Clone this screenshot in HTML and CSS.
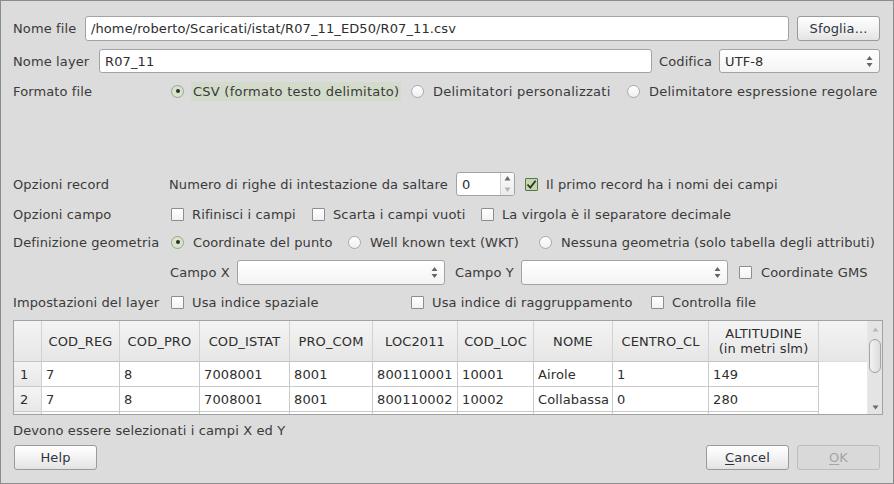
FILE: index.html
```html
<!DOCTYPE html>
<html>
<head>
<meta charset="utf-8">
<link rel="stylesheet" href="styles.css">
</head>
<body>
<div class="dialog">
  <div class="row r1">
    <span class="lbl lbl-file">Nome file</span>
    <div class="field f-grow path">/home/roberto/Scaricati/istat/R07_11_ED50/R07_11.csv</div>
    <div class="btn btn-side">Sfoglia...</div>
  </div>
  <div class="row r2">
    <span class="lbl lbl-layer">Nome layer</span>
    <div class="field f-grow">R07_11</div>
    <span class="lbl lbl-cod">Codifica</span>
    <div class="combo combo-enc"><span class="combo-txt">UTF-8</span><svg class="arr" width="7" height="13" viewBox="0 0 7 13"><path d="M3.5 1 L6.5 5 L0.5 5 Z" fill="#666"/><path d="M0.5 8 L6.5 8 L3.5 12 Z" fill="#666"/></svg></div>
  </div>
  <div class="row r3 rsmall wide">
    <span class="lbl col-lbl">Formato file</span>
    <div class="opt first w-240"><span class="radio on"></span><span class="txt txt-hl">CSV (formato testo delimitato)</span></div>
    <div class="opt w-216"><span class="radio"></span><span class="txt txt-r">Delimitatori personalizzati</span></div>
    <div class="opt"><span class="radio"></span><span class="txt txt-r">Delimitatore espressione regolare</span></div>
  </div>
  <div class="row r4">
    <span class="lbl col-lbl">Opzioni record</span>
    <span class="lbl num-lbl">Numero di righe di intestazione da saltare</span>
    <div class="spin"><span class="spin-val">0</span><span class="spin-btns"><svg width="7" height="20" viewBox="0 0 7 20"><path d="M3.5 2 L6.5 6.5 L0.5 6.5 Z" fill="#6a6a6a"/><path d="M0.5 13.5 L6.5 13.5 L3.5 18 Z" fill="#b4b4b4"/></svg></span></div>
    <div class="opt ml-10"><span class="check on"><svg width="11" height="11" viewBox="0 0 11 11"><path d="M1.5 5.5 L4.3 8.6 L9.6 1.8" fill="none" stroke="#2c2c2c" stroke-width="1.7"/></svg></span><span class="txt">Il primo record ha i nomi dei campi</span></div>
  </div>
  <div class="row rsmall r5">
    <span class="lbl col-lbl">Opzioni campo</span>
    <div class="opt first w-141"><span class="check"></span><span class="txt">Rifinisci i campi</span></div>
    <div class="opt w-169"><span class="check"></span><span class="txt">Scarta i campi vuoti</span></div>
    <div class="opt"><span class="check"></span><span class="txt">La virgola è il separatore decimale</span></div>
  </div>
  <div class="row rsmall r6">
    <span class="lbl col-lbl">Definizione geometria</span>
    <div class="opt first w-177"><span class="radio on"></span><span class="txt txt-r">Coordinate del punto</span></div>
    <div class="opt w-191"><span class="radio"></span><span class="txt txt-r">Well known text (WKT)</span></div>
    <div class="opt"><span class="radio"></span><span class="txt txt-r">Nessuna geometria (solo tabella degli attributi)</span></div>
  </div>
  <div class="row r7">
    <span class="lbl col-lbl"></span>
    <span class="lbl lbl-cx">Campo X</span>
    <div class="combo combo-x"><span class="combo-txt"></span><svg class="arr" width="7" height="13" viewBox="0 0 7 13"><path d="M3.5 1 L6.5 5 L0.5 5 Z" fill="#666"/><path d="M0.5 8 L6.5 8 L3.5 12 Z" fill="#666"/></svg></div>
    <span class="lbl lbl-cy">Campo Y</span>
    <div class="combo combo-y"><span class="combo-txt"></span><svg class="arr" width="7" height="13" viewBox="0 0 7 13"><path d="M3.5 1 L6.5 5 L0.5 5 Z" fill="#666"/><path d="M0.5 8 L6.5 8 L3.5 12 Z" fill="#666"/></svg></div>
    <div class="opt ml-11"><span class="check"></span><span class="txt txt-r">Coordinate GMS</span></div>
  </div>
  <div class="row rsmall r8">
    <span class="lbl col-lbl">Impostazioni del layer</span>
    <div class="opt first w-240"><span class="check"></span><span class="txt">Usa indice spaziale</span></div>
    <div class="opt w-240"><span class="check"></span><span class="txt">Usa indice di raggruppamento</span></div>
    <div class="opt"><span class="check"></span><span class="txt">Controlla file</span></div>
  </div>
  <div class="table">
    <div class="viewport">
      <div class="trow thead">
        <div class="c c0 h"></div>
        <div class="c c1 h">COD_REG</div>
        <div class="c c2 h">COD_PRO</div>
        <div class="c c3 h">COD_ISTAT</div>
        <div class="c c4 h">PRO_COM</div>
        <div class="c c5 h">LOC2011</div>
        <div class="c c6 h">COD_LOC</div>
        <div class="c c7 h">NOME</div>
        <div class="c c8 h">CENTRO_CL</div>
        <div class="c c9 h">ALTITUDINE<br>(in metri slm)</div>
        <div class="c-fill h"></div>
      </div>
      <div class="trow">
        <div class="c c0 rn">1</div>
        <div class="c c1">7</div>
        <div class="c c2">8</div>
        <div class="c c3">7008001</div>
        <div class="c c4">8001</div>
        <div class="c c5">800110001</div>
        <div class="c c6">10001</div>
        <div class="c c7">Airole</div>
        <div class="c c8">1</div>
        <div class="c c9">149</div>
      </div>
      <div class="trow">
        <div class="c c0 rn">2</div>
        <div class="c c1">7</div>
        <div class="c c2">8</div>
        <div class="c c3">7008001</div>
        <div class="c c4">8001</div>
        <div class="c c5">800110002</div>
        <div class="c c6">10002</div>
        <div class="c c7">Collabassa</div>
        <div class="c c8">0</div>
        <div class="c c9">280</div>
      </div>
      <div class="trow">
        <div class="c c0 rn"></div>
        <div class="c c1"></div>
        <div class="c c2"></div>
        <div class="c c3"></div>
        <div class="c c4"></div>
        <div class="c c5"></div>
        <div class="c c6"></div>
        <div class="c c7"></div>
        <div class="c c8"></div>
        <div class="c c9"></div>
      </div>
    </div>
    <div class="vscroll">
      <svg class="sb-arrow" width="7" height="5" viewBox="0 0 7 5"><path d="M3.5 0.5 L6.5 4.5 L0.5 4.5 Z" fill="#b8b8b8"/></svg>
      <div class="sb-handle"></div>
      <div class="sb-space"></div>
      <svg class="sb-arrow" width="7" height="5" viewBox="0 0 7 5"><path d="M0.5 0.5 L6.5 0.5 L3.5 4.5 Z" fill="#6a6a6a"/></svg>
    </div>
  </div>
  <div class="row rsmall msg">Devono essere selezionati i campi X ed Y</div>
  <div class="row r-btns">
    <div class="btn btn-help">Help</div>
    <div class="spacer"></div>
    <div class="btn btn-cancel"><span class="ul">C</span>ancel</div>
    <div class="btn btn-ok disabled"><span class="ul">O</span>K</div>
  </div>
</div>
</body>
</html>
```

FILE: styles.css
```css
html, body {
  margin: 0;
  padding: 0;
}
body {
  font-family: "DejaVu Sans", "Noto Sans", sans-serif;
  font-size: 13px;
  letter-spacing: 0.12px;
  color: #3a3a3a;
  background: #dcdcdc;
}
.dialog {
  width: 894px;
  height: 484px;
  box-sizing: border-box;
  border: 1px solid #8c8c8c;
  background: #dcdcdc;
  padding: 0 10px 0 12px;
  display: flex;
  flex-direction: column;
  overflow: hidden;
}
.row {
  display: flex;
  align-items: center;
  flex: none;
  white-space: nowrap;
}
.rsmall { height: 20px; }
.r1 { margin-top: 15px; height: 25px; margin-right: 3px; }
.r2 { margin-top: 8px; height: 24px; margin-right: 3px; }
.r3 { margin-top: 8px; }
.wide .txt { letter-spacing: 0.25px; }
.r4 { margin-top: 71px; height: 24px; }
.r5 { margin-top: 8px; }
.r6 { margin-top: 8px; }
.r7 { margin-top: 8px; height: 25px; }
.r8 { margin-top: 7px; }
.lbl { flex: none; }
.lbl-file { width: 72px; }
.lbl-layer { width: 86px; }
.lbl-cod { width: 60px; margin-left: 7px; }
.col-lbl { width: 155px; }
.num-lbl { width: 287px; margin-left: 1px; }
.lbl-cx { width: 67px; margin-left: 2px; }
.lbl-cy { width: 66px; margin-left: 10px; }

.field {
  flex: 1;
  min-width: 0;
  height: 100%;
  box-sizing: border-box;
  background: #fff;
  border: 1px solid #a3a3a3;
  border-radius: 3px;
  padding-left: 5px;
  display: flex;
  align-items: center;
  color: #2e2e2e;
}
.path { letter-spacing: 0.1px; }
.btn {
  flex: none;
  width: 83px;
  height: 25px;
  box-sizing: border-box;
  border: 1px solid #9a9a9a;
  border-radius: 3px;
  background: linear-gradient(#ffffff, #f3f3f3 50%, #e3e3e3);
  display: flex;
  align-items: center;
  justify-content: center;
  color: #2f3440;
}
.btn-side { margin-left: 8px; height: 25px; }
.btn-help { margin-left: 1px; }
.btn-ok { margin-left: 8px; margin-right: 3px; }
.btn.disabled {
  background: #d9d9d9;
  border-color: #bdbdbd;
  color: #a6a6a6;
}
.ul { text-decoration: underline; text-underline-offset: 2px; }
.spacer { flex: 1; }
.r-btns { margin-top: 5px; height: 25px; }

.combo {
  flex: none;
  height: 100%;
  box-sizing: border-box;
  border: 1px solid #a3a3a3;
  border-radius: 3px;
  background: linear-gradient(#ffffff, #f4f4f4);
  display: flex;
  align-items: center;
  padding: 0 6px 0 5px;
  color: #2e2e2e;
}
.combo-txt { flex: 1; }
.arr { flex: none; }
.combo-enc { width: 161px; }
.combo-x { width: 208px; }
.combo-y { width: 207px; }

.spin {
  flex: none;
  width: 59px;
  height: 100%;
  box-sizing: border-box;
  border: 1px solid #a3a3a3;
  border-radius: 3px;
  background: #fff;
  display: flex;
  align-items: stretch;
}
.spin-val {
  flex: 1;
  display: flex;
  align-items: center;
  padding-left: 5px;
  color: #2e2e2e;
}
.spin-btns {
  flex: none;
  width: 13px;
  border-left: 1px solid #d0d0d0;
  background: linear-gradient(#fafafa, #ececec);
  display: flex;
  align-items: center;
  justify-content: center;
  border-radius: 0 2px 2px 0;
}

.opt {
  display: flex;
  align-items: center;
  flex: none;
  height: 100%;
}
.opt.first { margin-left: 3px; }
.w-240 { width: 240px; }
.w-216 { width: 216px; }
.w-141 { width: 141px; }
.w-169 { width: 169px; }
.w-177 { width: 177px; }
.w-191 { width: 191px; }
.ml-10 { margin-left: 10px; }
.ml-11 { margin-left: 11px; }
.txt { margin-left: 8px; }
.txt-r { margin-left: 9px; }
.txt-hl {
  margin-left: 7px;
  padding: 0 2px;
  height: 19px;
  line-height: 19px;
  background: #d3dccb;
}
.radio {
  flex: none;
  width: 13px;
  height: 13px;
  box-sizing: border-box;
  border-radius: 50%;
  border: 1px solid #a9a9a9;
  background: linear-gradient(#ffffff, #f0f0f0);
  position: relative;
}
.radio.on {
  border-color: #97a58a;
  background: #d8e4cb;
}
.radio.on::after {
  content: "";
  position: absolute;
  left: 3.5px;
  top: 3.5px;
  width: 4px;
  height: 4px;
  border-radius: 50%;
  background: #2f2f2f;
}
.check {
  flex: none;
  width: 13px;
  height: 13px;
  box-sizing: border-box;
  border: 1px solid #8d8d8d;
  border-radius: 1px;
  background: linear-gradient(#ffffff, #f2f2f2);
  display: flex;
  align-items: center;
  justify-content: center;
}
.check.on {
  border-color: #5f6f52;
  background: #c3d9a9;
}

.table {
  flex: none;
  margin-top: 8px;
  height: 95px;
  box-sizing: border-box;
  border: 1px solid #a2a2a2;
  background: #fff;
  display: flex;
  overflow: hidden;
}
.viewport {
  flex: 1;
  min-width: 0;
  overflow: hidden;
}
.trow {
  display: flex;
  height: 25px;
  flex: none;
}
.thead {
  height: 41px;
}
.c {
  flex: none;
  box-sizing: border-box;
  border-right: 1px solid #cacaca;
  border-bottom: 1px solid #cacaca;
  display: flex;
  align-items: center;
  padding-left: 4px;
  color: #2e2e2e;
  overflow: hidden;
}
.c.h {
  justify-content: center;
  text-align: center;
  padding-left: 0;
  line-height: 15px;
  background: linear-gradient(#f4f4f4, #e6e6e6);
  border-right-color: #d2d2d2;
  border-bottom-color: #c4c4c4;
}
.c-fill.h {
  flex: 1;
  background: linear-gradient(#f4f4f4, #e6e6e6);
  border-bottom: 1px solid #dcdcdc;
}
.c.rn {
  background: linear-gradient(#f4f4f4, #e8e8e8);
  border-right-color: #d0d0d0;
  padding-left: 6px;
}
.c0 { width: 28px; }
.c1 { width: 78px; }
.c2 { width: 80px; }
.c3 { width: 90px; }
.c4 { width: 83px; }
.c5 { width: 85px; }
.c6 { width: 76px; }
.c7 { width: 79px; }
.c8 { width: 96px; }
.c9 { width: 110px; }

.vscroll {
  flex: none;
  width: 15px;
  background: #e4e4e4;
  border-left: 1px solid #e8e8e8;
  box-sizing: border-box;
  display: flex;
  flex-direction: column;
  align-items: center;
  padding: 6px 0 4px;
}
.sb-arrow { flex: none; }
.sb-handle {
  flex: none;
  margin-top: 7px;
  width: 12px;
  height: 34px;
  box-sizing: border-box;
  border: 1px solid #a4a4a4;
  border-radius: 6px;
  background: linear-gradient(90deg, #f2f2f2, #dcdcdc);
}
.sb-space { flex: 1; }

.msg { margin-top: 5px; }
```
